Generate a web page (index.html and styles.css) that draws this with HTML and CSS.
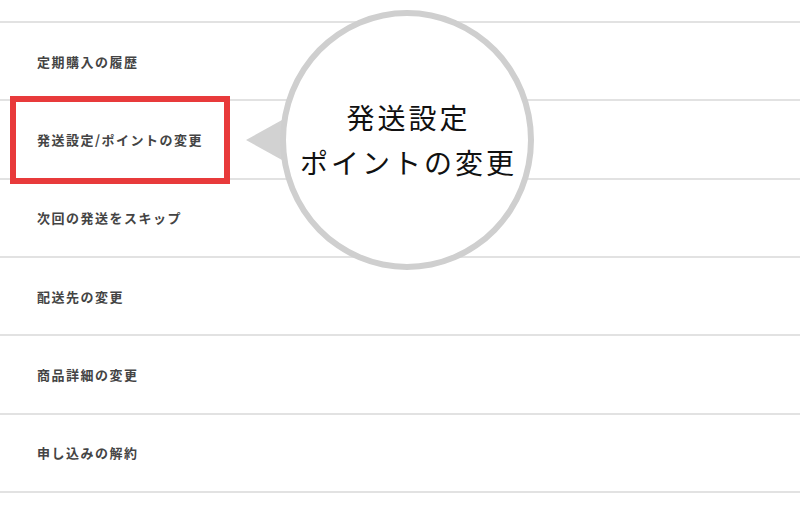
FILE: index.html
```html
<!DOCTYPE html>
<html lang="ja">
<head>
<meta charset="utf-8">
<link rel="stylesheet" href="styles.css">
</head>
<body>
<div class="page">
  <ul class="menu">
    <li class="item">定期購入の履歴</li>
    <li class="item">発送設定/ポイントの変更</li>
    <li class="item">次回の発送をスキップ</li>
    <li class="item">配送先の変更</li>
    <li class="item">商品詳細の変更</li>
    <li class="item">申し込みの解約</li>
  </ul>
  <div class="highlight"></div>
  <div class="callout">
    <div class="pointer"></div>
    <div class="bubble">
      <span class="bubble-line">発送設定</span>
      <span class="bubble-line">ポイントの変更</span>
    </div>
  </div>
</div>
</body>
</html>
```

FILE: styles.css
```css
html, body {
  margin: 0;
  padding: 0;
  background: #ffffff;
}
.page {
  position: relative;
  width: 800px;
  height: 516px;
  overflow: hidden;
  font-family: "Noto Sans CJK JP", "Noto Sans", sans-serif;
}
.menu {
  list-style: none;
  margin: 0;
  padding: 21px 0 0 0;
}
.item {
  display: flex;
  align-items: center;
  height: 76.33px;
  padding-left: 37px;
  border-bottom: 2px solid #e2e2e2;
  font-size: 13px;
  font-weight: 700;
  letter-spacing: 1.5px;
  color: #444444;
}
.item:first-child {
  border-top: 2px solid #e2e2e2;
}
.highlight {
  position: absolute;
  left: 10px;
  top: 96px;
  width: 208px;
  height: 76px;
  border: 6px solid #e83a3b;
}
.callout {
  position: absolute;
  left: 246px;
  top: 10px;
  display: flex;
  align-items: center;
}
.pointer {
  width: 0;
  height: 0;
  border-top: 20px solid transparent;
  border-bottom: 20px solid transparent;
  border-right: 36px solid #d2d2d2;
  margin-right: -2px;
}
.bubble {
  width: 242px;
  height: 248px;
  border: 6px solid #cfcfcf;
  border-radius: 50%;
  background: #ffffff;
  display: flex;
  flex-direction: column;
  align-items: center;
  justify-content: center;
  position: relative;
  z-index: 1;
}
.bubble-line {
  display: block;
  font-size: 28px;
  font-weight: 400;
  line-height: 45px;
  letter-spacing: 3px;
  margin-right: -3px;
  color: #111111;
}
```
